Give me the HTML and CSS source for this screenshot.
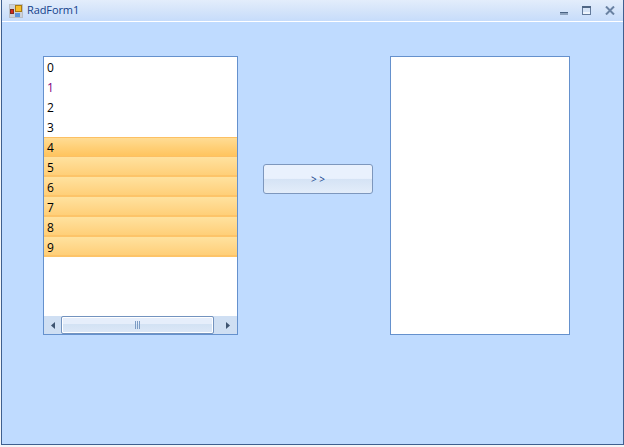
FILE: index.html
```html
<!DOCTYPE html>
<html lang="en">
<head>
<meta charset="UTF-8">
<title>RadForm1</title>
<link rel="stylesheet" href="styles.css">
</head>
<body>
<div class="window">
  <div class="title-bar">
    <svg class="app-icon" width="14" height="14" viewBox="0 0 14 14">
      <rect x="0" y="0" width="14" height="14" fill="#b9bec6"/>
      <rect x="1" y="1" width="12" height="12" fill="#ccd1d9"/>
      <rect x="6.5" y="1.5" width="6" height="6" fill="#f7bd2a" stroke="#a87a10" stroke-width="1"/>
      <rect x="1.5" y="5.5" width="3" height="4" fill="#d5281c" stroke="#7d2a20" stroke-width="1"/>
      <rect x="6" y="9" width="5" height="4" fill="#5f96dc"/>
    </svg>
    <span class="title-text">RadForm1</span>
    <div class="window-buttons">
      <svg class="min-icon" width="8" height="3" viewBox="0 0 8 3"><rect x="0" y="0" width="8" height="1" fill="#4a6383"/><rect x="0" y="1" width="8" height="2" fill="#8ea3be"/></svg>
      <svg width="9" height="9" viewBox="0 0 9 9"><rect x="0.5" y="0.5" width="8" height="8" fill="#d5e3f6" stroke="#62799a"/><rect x="0" y="0" width="9" height="2" fill="#4f6685"/><rect x="1" y="6" width="7" height="2" fill="#eef4fc"/></svg>
      <svg width="10" height="9" viewBox="0 0 10 9"><path d="M1 0.5 L9 8.5 M9 0.5 L1 8.5" stroke="#6a82a2" stroke-width="2" fill="none"/></svg>
    </div>
  </div>
  <div class="client">
    <div class="list-box list-left">
      <div class="rows">
        <div class="row">0</div>
        <div class="row purple">1</div>
        <div class="row">2</div>
        <div class="row">3</div>
        <div class="row active">4</div>
        <div class="row selected">5</div>
        <div class="row selected">6</div>
        <div class="row selected">7</div>
        <div class="row selected">8</div>
        <div class="row selected">9</div>
      </div>
      <div class="h-scroll">
        <div class="scroll-btn">
          <svg width="4" height="7" viewBox="0 0 4 7"><path d="M4 0 L0 3.5 L4 7 Z" fill="#3e5470"/></svg>
        </div>
        <div class="thumb">
          <svg width="6" height="8" viewBox="0 0 6 8"><path d="M0.5 0 V8 M2.5 0 V8 M4.5 0 V8" stroke="#7d9cc4" fill="none"/></svg>
        </div>
        <div class="scroll-btn scroll-right">
          <svg width="4" height="7" viewBox="0 0 4 7"><path d="M0 0 L4 3.5 L0 7 Z" fill="#3e5470"/></svg>
        </div>
      </div>
    </div>
    <button class="move-btn">&gt; &gt;</button>
    <div class="list-box list-right"></div>
  </div>
</div>
</body>
</html>
```

FILE: styles.css
```css
body, html {
  background-color: #f4f6f8;
  margin: 0;
  padding: 0;
  height: 100%;
  overflow: hidden;
}

.window {
  margin-left: 1px;
  width: 623px;
  height: 445px;
  box-sizing: border-box;
  border-left: 1px solid #3f6090;
  border-right: 1px solid #3f6090;
  border-bottom: 1px solid #3f6090;
  background-color: #bfdbff;
  display: flex;
  flex-direction: column;
  font-family: "Open Sans", "Noto Sans", sans-serif;
}

.title-bar {
  height: 22px;
  box-sizing: border-box;
  display: flex;
  align-items: center;
  padding: 0 8px 2px 7px;
  background: linear-gradient(to bottom, #e3edfb 0%, #d6e5fa 45%, #c6dcfb 100%);
  border-bottom: 1px solid #ffffff;
}

.app-icon {
  margin: 3px 4px 0 0;
}

.title-text {
  color: #15428b;
  font-size: 11px;
  letter-spacing: -0.1px;
}

.window-buttons {
  margin: 2px 0 0 auto;
  display: flex;
  align-items: center;
  gap: 14px;
}

.min-icon {
  align-self: flex-end;
}

.client {
  flex: 1;
  display: flex;
  align-items: flex-start;
  padding: 34px 0 0 41px;
}

.list-box {
  box-sizing: border-box;
  height: 279px;
  background-color: #ffffff;
  border: 1px solid #6591cd;
  display: flex;
  flex-direction: column;
}

.list-left {
  width: 195px;
}

.list-right {
  width: 180px;
}

.rows {
  flex: 1;
}

.row {
  height: 20px;
  box-sizing: border-box;
  padding: 1px 0 0 3px;
  font-size: 12px;
  line-height: 20px;
  color: #000000;
}

.purple {
  color: #800080;
}

.selected {
  background: linear-gradient(to bottom, #ffe29f 0%, #ffd88c 50%, #ffcf78 100%);
  border-bottom: 2px solid #fdc469;
}

.active {
  background: linear-gradient(to bottom, #ffdc94 0%, #ffd078 50%, #ffc45e 100%);
  border-top: 1px solid #fcc064;
  border-bottom: 1px solid #fcc064;
  padding-top: 0;
}

.h-scroll {
  height: 18px;
  box-sizing: border-box;
  display: flex;
  align-items: stretch;
  background-color: #cfdff3;
}

.scroll-btn {
  width: 17px;
  flex-shrink: 0;
  display: flex;
  align-items: center;
  justify-content: center;
}

.scroll-right {
  width: 23px;
  padding-left: 5px;
  box-sizing: border-box;
}

.thumb {
  flex: 1;
  box-sizing: border-box;
  display: flex;
  align-items: center;
  justify-content: center;
  border: 1px solid #7393bf;
  border-radius: 2px;
  box-shadow: inset 0 0 0 1px #ffffff;
  background: linear-gradient(to bottom, #e6eefb 0%, #e6eefb 45%, #d3e2f4 46%, #dde8f7 100%);
}

.move-btn {
  width: 110px;
  height: 30px;
  margin: 108px 17px 0 25px;
  padding: 0;
  flex-shrink: 0;
  border: 1px solid #7d97bd;
  border-radius: 3px;
  background: linear-gradient(to bottom, #e9f1fd 0%, #e9f1fd 48%, #d5e3f5 50%, #e3edfa 100%);
  color: #15428b;
  font-family: "Open Sans", "Noto Sans", sans-serif;
  font-size: 10px;
  line-height: 28px;
}
```
